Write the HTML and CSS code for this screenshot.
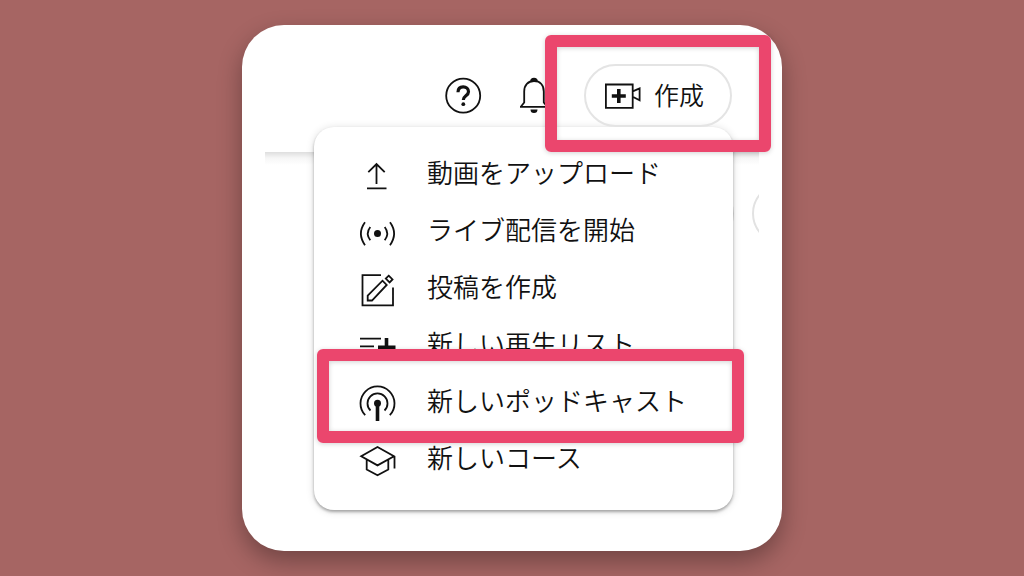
FILE: index.html
```html
<!DOCTYPE html>
<html lang="ja">
<head>
<meta charset="utf-8">
<meta name="viewport" content="width=device-width, initial-scale=1">
<title>作成メニュー</title>
<link rel="stylesheet" href="styles.css">
</head>
<body>
<main class="card">
  <header class="toolbar">
    <button class="icon-button" type="button" aria-label="ヘルプ">
      <svg class="icon" viewBox="0 0 37 37" aria-hidden="true">
        <circle cx="19.2" cy="18.7" r="17"/>
        <path class="bold" d="M14 15.2c0-3.6 2.2-5.400 5.200-5.400s5.300 1.900 5.300 4.900c0 4.100-5.200 4.200-5.200 8.300"/>
        <circle class="solid" cx="19.3" cy="27.2" r="1.9"/>
      </svg>
    </button>
    <button class="icon-button" type="button" aria-label="通知">
      <svg class="icon" viewBox="0 0 37 37" aria-hidden="true">
        <path d="M6 29.900H34M7 29.500L10.200 25.500V14.500C10.200 8 14 4 20 4S29.800 8 29.800 14.500V25.500L33 29.500"/>
        <path class="solid" d="M16.200 4.500a3.800 3.700 0 0 1 7.600 0zM16.500 32.500h7a3.500 3.500 0 0 1-7 0z"/>
      </svg>
    </button>
    <div class="marked marked-create">
      <button class="create" type="button">
        <svg class="icon" viewBox="0 0 37 37" aria-hidden="true">
          <path d="M1.900 7.500h26.800v23.300H1.900zM28.700 14.300l6.900-3v12l-6.900-3.500"/>
          <path class="plus" d="M7.800 19h14M14.800 12v14"/>
        </svg>
        <span>作成</span>
      </button>
    </div>
  </header>
  <section class="content">
    <div class="backdrop" aria-hidden="true">
      <span class="pill"></span>
      <span class="round"></span>
    </div>
    <nav class="menu" aria-label="作成">
      <button class="item" type="button">
        <svg class="icon" viewBox="0 0 37 37" aria-hidden="true"><path d="M17.500 27V7M9.300 15.200l8.200-8.200 8.200 8.200M8 31.300h19.500"/></svg>
        <span>動画をアップロード</span>
      </button>
      <button class="item" type="button">
        <svg class="icon" viewBox="0 0 37 37" aria-hidden="true">
          <path d="M6 8.300Q-2.200 19.500 6 31.200M31 8.300Q39.200 19.500 31 31.200M11.300 13Q6.200 19.500 11.300 26.300M25.700 13Q30.800 19.500 25.700 26.300"/>
          <circle class="solid" cx="18.500" cy="19.500" r="3.500"/>
        </svg>
        <span>ライブ配信を開始</span>
      </button>
      <button class="item" type="button">
        <svg class="icon" viewBox="0 0 37 37" aria-hidden="true"><path d="M22 4.200H3.500V34.300H34V16.500M8.700 29.500v-5L23.500 9.700l4.200 4.200L13 29.500zM29.700 4.700l3.800 3.700-2.900 3-3.800-3.800z"/></svg>
        <span>投稿を作成</span>
      </button>
      <button class="item" type="button">
        <svg class="icon" viewBox="0 0 37 37" aria-hidden="true">
          <path d="M1 10.700h21M1 18.300h14"/>
          <path class="plus" d="M19 19.200h17.500M27.500 10v18.500"/>
        </svg>
        <span>新しい再生リスト</span>
      </button>
      <div class="marked marked-podcast">
        <button class="item" type="button">
          <svg class="icon" viewBox="0 0 37 37" aria-hidden="true">
            <path d="M6.200 30.200A17 17 0 1 1 30.800 30.200M11.500 25.500A10 10 0 1 1 25.500 25.500"/>
            <circle class="solid" cx="18.500" cy="18.300" r="3.500"/>
            <path class="plus" d="M18.500 18v18"/>
          </svg>
          <span>新しいポッドキャスト</span>
        </button>
      </div>
      <button class="item" type="button">
        <svg class="icon" viewBox="0 0 37 37" aria-hidden="true"><path d="M18.500 5l16.500 9.200-16.500 9.200L2.200 14.200zM35.500 14v12.500M7.700 17.500v10l10.800 5.700 10.800-5.700v-10"/></svg>
        <span>新しいコース</span>
      </button>
    </nav>
  </section>
</main>
</body>
</html>
```
FILE: styles.css
```css
* {
  box-sizing: border-box;
}

body {
  margin: 0;
  min-height: 100vh;
  display: flex;
  align-items: center;
  justify-content: center;
  background: #a66563;
  color: #111;
  font-family: "Noto Sans CJK JP", sans-serif;
  font-weight: 350;
}

button {
  margin: 0;
  padding: 0;
  border: 0;
  background: none;
  color: inherit;
  font: inherit;
  cursor: pointer;
}

.card {
  width: 100%;
  max-width: 540px;
  padding: 0 23px 41px;
  border-radius: 42px;
  background: #fff;
  box-shadow: 0 10px 24px rgba(0, 0, 0, 0.32);
}

.toolbar {
  display: flex;
  align-items: center;
  justify-content: flex-end;
  gap: 33px;
  padding: 39px 27px 0 0;
}

.icon {
  display: block;
  flex: none;
  width: 37px;
  height: 37px;
  overflow: visible;
  fill: none;
  stroke: #111;
  stroke-width: 1.8;
}

.icon .solid {
  fill: #111;
  stroke: none;
}

.icon .bold {
  stroke-width: 3.2;
}

.icon .plus {
  stroke-width: 3.6;
}

.create {
  display: flex;
  align-items: center;
  gap: 13px;
  height: 63px;
  padding: 0 26px 0 18px;
  border: 2px solid #e4e4e4;
  border-radius: 32px;
  font-size: 25px;
  line-height: 32px;
}

.create span,
.item span {
  padding-bottom: 4px;
}

.marked {
  position: relative;
  z-index: 2;
}

.marked::after {
  content: "";
  position: absolute;
  border: 12px solid #eb466d;
  border-radius: 6px;
  box-shadow: 0 1px 5px rgba(0, 0, 0, 0.18), inset 0 1px 5px rgba(0, 0, 0, 0.18);
  pointer-events: none;
}

.marked-create::after {
  inset: -29px -39px -25px;
}

.marked-podcast::after {
  inset: -24px -11px -13px 3px;
}

.content {
  position: relative;
}

.backdrop {
  position: absolute;
  inset: 25px 0 0;
  overflow: hidden;
  background: linear-gradient(#dedede, #f6f6f6 6px, #fff 13px) top / 100% 13px no-repeat;
}

.pill,
.round {
  position: absolute;
  top: 31px;
  height: 61px;
  border: 2px solid #e2e2e2;
  border-radius: 31px;
}

.pill {
  right: 25px;
  width: 120px;
}

.round {
  right: -54px;
  width: 61px;
}

.menu {
  position: relative;
  margin: 0 26px 0 49px;
  padding: 18px 0 23px;
  border-radius: 20px;
  background: #fff;
  box-shadow: 0 2px 3px rgba(0, 0, 0, 0.3), 0 1px 8px rgba(0, 0, 0, 0.14);
}

.item {
  display: flex;
  align-items: center;
  gap: 31px;
  width: 100%;
  height: 57px;
  padding-left: 45px;
  font-size: 26px;
  line-height: 36px;
  text-align: left;
  white-space: nowrap;
}

.item .icon {
  margin-top: 4px;
}
```
